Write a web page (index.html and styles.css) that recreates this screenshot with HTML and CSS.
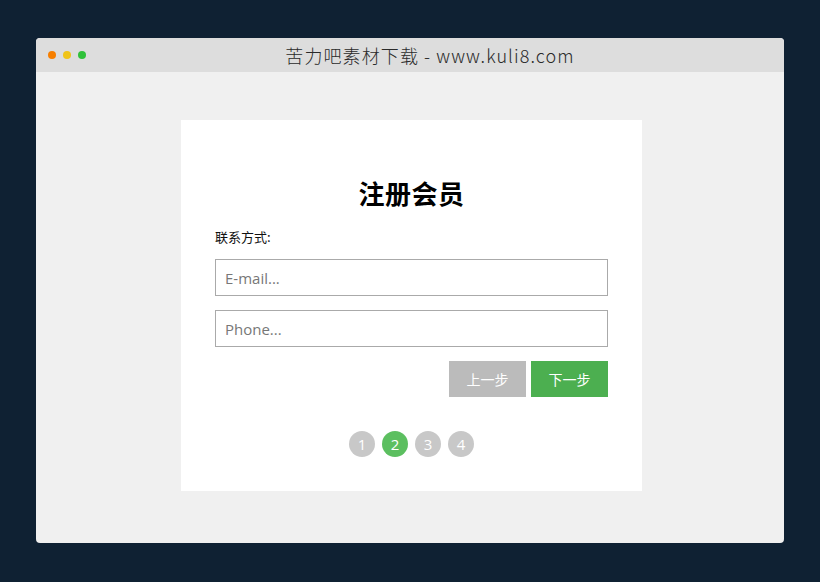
FILE: index.html
```html
<!DOCTYPE html>
<html lang="zh-CN">
<head>
  <meta charset="UTF-8" />
  <title>注册会员</title>
  <link rel="stylesheet" href="styles.css">
</head>
<body>
  <!-- ===== BROWSER WINDOW ===== -->
  <div class="window">
    <div class="title-bar">
      <div class="dots">
        <span class="dot dot-orange"></span>
        <span class="dot dot-yellow"></span>
        <span class="dot dot-green"></span>
      </div>
      <div class="title">苦力吧素材下载 - www.kuli8.com</div>
    </div>

    <!-- ===== FORM CARD ===== -->
    <div class="window-body">
      <form class="card">
        <h2 class="card-title">注册会员</h2>
        <div class="field-label">联系方式:</div>
        <input class="text-input" type="text" placeholder="E-mail...">
        <input class="text-input" type="text" placeholder="Phone...">

        <div class="actions">
          <button type="button" class="btn btn-prev">上一步</button>
          <button type="button" class="btn btn-next">下一步</button>
        </div>

        <div class="steps">
          <span class="step">1</span>
          <span class="step active">2</span>
          <span class="step">3</span>
          <span class="step">4</span>
        </div>
      </form>
    </div>
  </div>
</body>
</html>
```

FILE: styles.css
```css
/* === PALETTE === */
:root {
  --color-page: #0f2133;
  --color-bar: #dddddd;
  --color-body: #f0f0f0;
  --color-card: #ffffff;
  --color-green: #4caf50;
  --color-step-active: #5cbf60;
  --color-grey: #bbbbbb;
  --color-step: #c8c8c8;
}

* {
  margin: 0;
  padding: 0;
  box-sizing: border-box;
}

body {
  background-color: var(--color-page);
  font-family: "Open Sans", "Noto Sans CJK SC", sans-serif;
  padding: 38px 36px 0;
  min-height: 100vh;
}

/* 1) Window frame */
.window {
  width: 748px;
  border-radius: 4px;
  overflow: hidden;
  background-color: var(--color-body);
}

.title-bar {
  position: relative;
  height: 34px;
  padding-left: 40px;
  background-color: var(--color-bar);
  display: flex;
  align-items: center;
  justify-content: center;
}

.dots {
  position: absolute;
  left: 12px;
  top: 13px;
  display: flex;
  gap: 7px;
}
.dot {
  width: 8px;
  height: 8px;
  border-radius: 50%;
}
.dot-orange { background-color: #f77f00; }
.dot-yellow { background-color: #f0c419; }
.dot-green  { background-color: #2fc13a; }

.title {
  font-family: "Noto Sans CJK SC", sans-serif;
  font-weight: 300;
  font-size: 18px;
  color: #2a2a2a;
  letter-spacing: 1.1px;
}

/* 2) Window body */
.window-body {
  padding: 48px 0 52px 3px;
  display: flex;
  justify-content: center;
}

/* 3) Card */
.card {
  width: 461px;
  background-color: var(--color-card);
  padding: 58px 34px 34px;
  display: flex;
  flex-direction: column;
}

.card-title {
  font-family: "Noto Sans CJK SC", sans-serif;
  font-size: 26px;
  font-weight: 700;
  line-height: 30px;
  text-align: center;
  color: #000000;
  letter-spacing: 0.5px;
}

.field-label {
  margin-top: 20px;
  font-family: "Noto Sans CJK SC", sans-serif;
  font-size: 13px;
  line-height: 18px;
  color: #111111;
}

.text-input {
  margin-top: 13px;
  height: 37px;
  width: 100%;
  border: 1px solid #aaaaaa;
  padding: 0 9px;
  font-family: "Open Sans", sans-serif;
  font-size: 15px;
  color: #333333;
  outline: none;
}
.text-input + .text-input {
  margin-top: 14px;
}
.text-input::placeholder {
  color: #777777;
}

/* 4) Buttons */
.actions {
  margin-top: 14px;
  display: flex;
  justify-content: flex-end;
  gap: 5px;
}
.btn {
  width: 77px;
  height: 36px;
  border: none;
  font-family: "Noto Sans CJK SC", sans-serif;
  font-size: 14px;
  color: #ffffff;
  cursor: pointer;
}
.btn-prev { background-color: var(--color-grey); }
.btn-next { background-color: var(--color-green); }

/* 5) Step dots */
.steps {
  margin-top: 34px;
  display: flex;
  justify-content: center;
  gap: 7px;
}
.step {
  width: 26px;
  height: 26px;
  border-radius: 50%;
  background-color: var(--color-step);
  color: #ffffff;
  font-size: 15px;
  display: flex;
  align-items: center;
  justify-content: center;
}
.step.active {
  background-color: var(--color-step-active);
}
```
